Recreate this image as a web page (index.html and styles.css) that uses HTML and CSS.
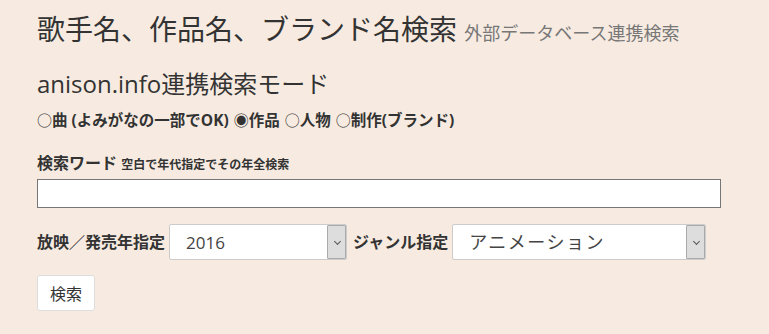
FILE: index.html
```html
<!DOCTYPE html>
<html lang="ja">
<head>
    <meta charset="UTF-8">
    <meta name="viewport" content="width=device-width, initial-scale=1.0">
    <title>歌手名、作品名、ブランド名検索</title>
    <link rel="stylesheet" href="styles.css">
</head>
<body>
    <main class="search-page">
        <h1 class="page-title">歌手名、作品名、ブランド名検索 <small>外部データベース連携検索</small></h1>

        <h2 class="mode-title">anison.info連携検索モード</h2>
        <div class="mode-list">
            <label class="mode-item"><span class="radio">○</span>曲 (よみがなの一部でOK)</label>
            <label class="mode-item"><span class="radio">◉</span>作品</label>
            <label class="mode-item"><span class="radio">○</span>人物</label>
            <label class="mode-item"><span class="radio">○</span>制作(ブランド)</label>
        </div>

        <div class="field">
            <label class="field-label" for="word">検索ワード <small>空白で年代指定でその年全検索</small></label>
            <input type="text" id="word" class="text-input">
        </div>

        <div class="filter-row">
            <label class="field-label" for="year">放映／発売年指定</label>
            <div class="select-box year">
                <select id="year">
                    <option>2016</option>
                </select>
            </div>
            <label class="field-label" for="genre">ジャンル指定</label>
            <div class="select-box genre">
                <select id="genre">
                    <option>アニメーション</option>
                </select>
            </div>
        </div>

        <button type="button" class="search-button">検索</button>
    </main>
</body>
</html>
```

FILE: styles.css
```css
*{margin:0;padding:0;box-sizing:border-box}
body{font-family:"Open Sans","Noto Sans CJK JP",sans-serif;background:#f7ebe1;color:#333}

.search-page{padding:10px 37px 0}

.page-title{font-size:28px;font-weight:400;line-height:38px;color:#333}
.page-title small{font-size:18px;color:#777;font-weight:400}

.mode-title{font-size:24px;font-weight:400;line-height:32px;margin-top:16px}

.mode-list{display:flex;font-size:15.5px;font-weight:700;line-height:22px;margin-top:9px}
.mode-item{display:flex;align-items:center;margin-right:5px}
.radio{font-weight:400;font-size:15px}

.field{margin-top:21px}
.field-label{font-size:16px;font-weight:700;line-height:22px;display:block}
.field-label small{font-size:12px}
.text-input{display:block;width:684px;height:29px;margin-top:3px;border:1px solid #767676;background:#fff;font-size:16px}

.filter-row{display:flex;align-items:center;margin-top:16px}
.filter-row .field-label{margin-right:4px}

.select-box{position:relative;height:36px;margin-right:6px}
.select-box.year{width:178px}
.select-box.genre{width:254px}
.select-box select{appearance:none;-webkit-appearance:none;width:100%;height:100%;border:1px solid #ccc;border-radius:2px;background:#fff;padding:0 0 0 16px;font-family:inherit;font-size:17px;color:#444}
.select-box.genre select{font-size:18px;letter-spacing:1.5px}
.select-box::after{content:"";position:absolute;top:1px;right:1px;bottom:1px;width:17px;background:#ddd;border:1px solid #aaa;border-radius:1px;pointer-events:none}
.select-box::before{content:"";position:absolute;right:7px;top:15px;width:4px;height:4px;border-right:1px solid #555;border-bottom:1px solid #555;transform:rotate(45deg);z-index:1;pointer-events:none}

.search-button{display:block;margin-top:15px;width:58px;height:36px;background:#fff;border:1px solid #ddd;border-radius:3px;font-family:inherit;font-size:16px;color:#333}
```
